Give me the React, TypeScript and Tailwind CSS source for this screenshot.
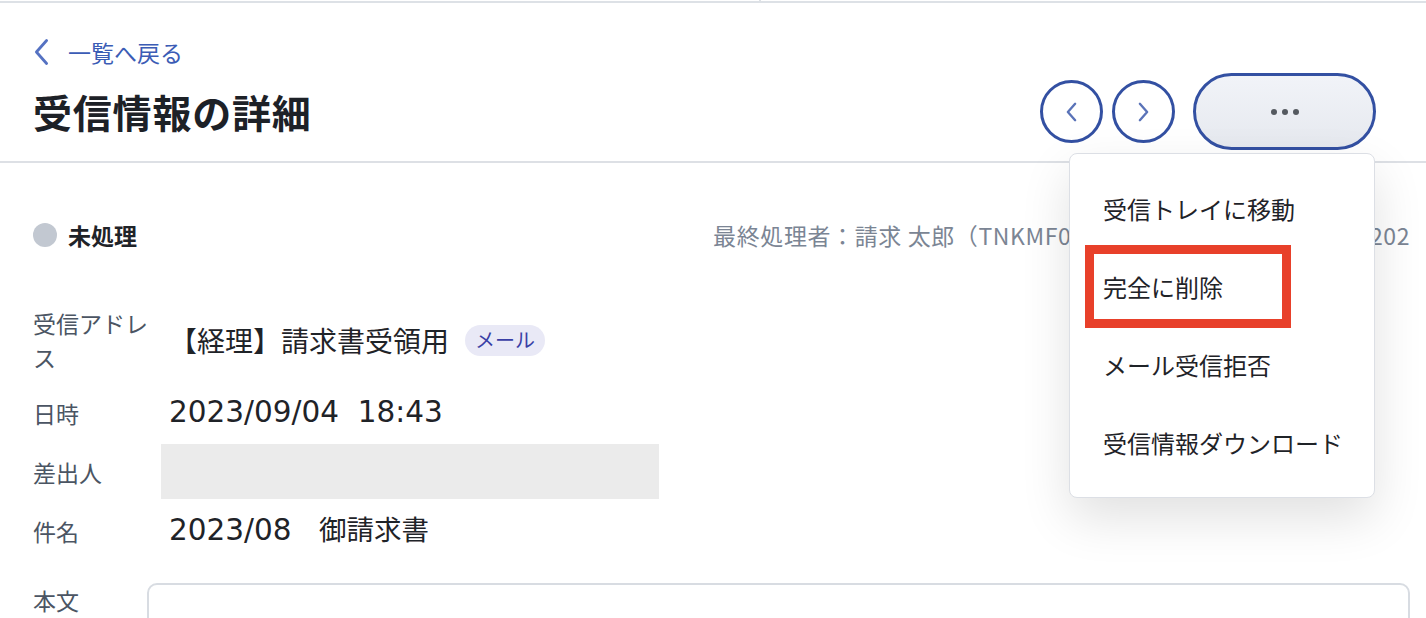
import React from "react";

function Chevron({ dir, className, width = 2.2 }: { dir: "left" | "right"; className?: string; width?: number }) {
  return (
    <svg viewBox="0 0 12 22" className={className} fill="none" stroke="currentColor" strokeWidth={width} strokeLinecap="round" strokeLinejoin="round">
      {dir === "left" ? <polyline points="10 2 2 11 10 20" /> : <polyline points="2 2 10 11 2 20" />}
    </svg>
  );
}

const menuItems = ["受信トレイに移動", "完全に削除", "メール受信拒否", "受信情報ダウンロード"];

function MoreMenu() {
  return (
    <div className="absolute right-[1px] top-[80px] z-10 h-[345px] w-[306px] rounded-[8px] border border-[#dcdfe5] bg-white pt-[16px] shadow-[0_20px_50px_rgba(0,0,0,0.12)]">
      {menuItems.map((item) => (
        <div key={item} className="flex h-[78px] items-center pl-[33px] text-[24px] text-[#1f2328]">
          {item}
        </div>
      ))}
      {/* annotation */}
      <div className="pointer-events-none absolute left-[15px] top-[91px] h-[83px] w-[206px] border-[9px] border-[#e8402a]" />
    </div>
  );
}

function Field({ label, children }: { label: string; children: React.ReactNode }) {
  return (
    <div className="flex h-[57px] items-center">
      <div className="w-[128px] text-[23px] leading-[34px] text-[#4b5563]">{label}</div>
      {children}
    </div>
  );
}

const num = "font-['DejaVu_Sans','Noto_Sans_CJK_JP',sans-serif] text-[29.5px]";

export default function App() {
  return (
    <div className="min-h-screen bg-white font-['Noto_Sans_CJK_JP','Noto_Sans',sans-serif] text-[#1f2328]">
      <div className="flex h-[3px]">
        <div className="w-[761px] border-b-2 border-r-2 border-[#dde1e6]" />
        <div className="flex-1 border-b-2 border-[#dde1e6]" />
      </div>

      <header className="border-b-2 border-[#dde0e5] pb-[11px] pl-[33px] pr-[50px] pt-[35px]">
        <a href="#" className="flex h-[28px] items-center gap-[18px] text-[23px] text-[#3b5cb5]">
          <Chevron dir="left" className="h-[28px] w-[17px] text-[#5572c2]" />
          一覧へ戻る
        </a>
        <div className="mt-[7px] flex h-[77px] items-center justify-between">
          <h1 className="text-[39px] font-bold tracking-[0.8px] text-[#1d2127]">受信情報の詳細</h1>
          <div className="relative flex items-center">
            <button className="flex h-[63px] w-[63px] items-center justify-center rounded-full border-[3px] border-[#3350a2] bg-white text-[#5a73b8]">
              <Chevron dir="left" width={2.6} className="h-[20px] w-[11px]" />
            </button>
            <button className="ml-[9px] flex h-[63px] w-[63px] items-center justify-center rounded-full border-[3px] border-[#3350a2] bg-white text-[#5a73b8]">
              <Chevron dir="right" width={2.6} className="h-[20px] w-[11px]" />
            </button>
            <button className="ml-[18px] flex h-[77px] w-[183px] items-center justify-center gap-[5px] rounded-full border-[3px] border-[#3350a2] bg-linear-to-b from-[#f1f3f8] to-[#e6e9ef]">
              <span className="h-[6px] w-[6px] rounded-full bg-[#555a60]" />
              <span className="h-[6px] w-[6px] rounded-full bg-[#555a60]" />
              <span className="h-[6px] w-[6px] rounded-full bg-[#555a60]" />
            </button>
            <MoreMenu />
          </div>
        </div>
      </header>

      <main className="pl-[33px] pr-[16px] pt-[57px]">
        <div className="flex h-[30px] items-center justify-between">
          <div className="flex items-center gap-[11px]">
            <span className="h-[24px] w-[24px] rounded-full bg-[#c2c8d1]" />
            <span className="text-[23px] font-bold">未処理</span>
          </div>
          <div className="text-[23px] tracking-[0.6px] text-[#7b8594]">最終処理者：請求 太郎（TNKMF0012） 処理番号 20230904-0202</div>
        </div>

        <div className="mt-[56px] flex items-center">
          <div className="w-[128px] text-[23px] leading-[34px] text-[#4b5563]">受信アドレス</div>
          <div className="flex items-center gap-[16px] pl-[8px]">
            <span className="text-[28px]">【経理】請求書受領用</span>
            <span className="flex h-[31px] items-center rounded-full bg-[#e9e9f6] px-[10px] text-[20px] text-[#3a3fa6]">メール</span>
          </div>
        </div>

        <div className="mt-[10px] flex flex-col gap-[2px]">
          <Field label="日時">
            <span className={`pl-[8px] ${num}`}>2023/09/04&nbsp;&nbsp;18:43</span>
          </Field>
          <Field label="差出人">
            <div className="h-[55px] w-[498px] bg-[#ebebeb]" />
          </Field>
          <Field label="件名">
            <span className="pl-[8px] text-[27.5px]">
              <span className={num}>2023/08</span>　御請求書
            </span>
          </Field>
        </div>

        <div className="mt-[24px] flex">
          <div className="w-[114px] text-[23px] leading-[34px] text-[#4b5563]">本文</div>
          <div className="h-[220px] flex-1 rounded-[10px] border-2 border-[#d8dce2]" />
        </div>
      </main>
    </div>
  );
}
